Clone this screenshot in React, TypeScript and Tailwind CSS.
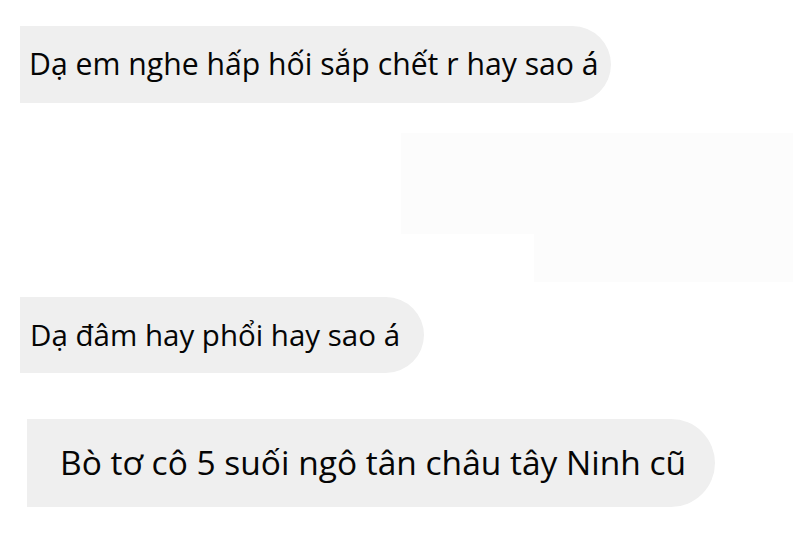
import React from 'react';

const font = { fontFamily: '"Open Sans", "Noto Sans", sans-serif' };

export default function App() {
  return (
    <div className="w-[793px] h-[554px] bg-white overflow-hidden text-[#050505]" style={font}>
      <div className="pt-[26px] flex flex-col">
        {/* Bubble 1 */}
        <div className="ml-[20px] w-[591px] h-[77px] bg-[#efefef] rounded-l-[8px] rounded-r-full flex items-center pl-[9px] text-[30.2px] leading-none">
          Dạ em nghe hấp hối sắp chết r hay sao á
        </div>

        {/* faint leftover blocks */}
        <div className="mt-[30px] ml-auto w-[392px] h-[101px] bg-[#fcfcfc]" />
        <div className="ml-auto w-[259px] h-[48px] bg-[#fcfcfc]" />

        {/* Bubble 2 */}
        <div className="mt-[15px] ml-[20px] w-[404px] h-[76px] bg-[#efefef] rounded-l-[8px] rounded-r-full flex items-center pl-[10px] text-[29.5px] leading-none">
          Dạ đâm hay phổi hay sao á
        </div>

        {/* Bubble 3 */}
        <div className="mt-[46px] ml-[27px] w-[688px] h-[88px] bg-[#efefef] rounded-l-[12px] rounded-r-full flex items-center pl-[33px] text-[33.5px] leading-none">
          Bò tơ cô 5 suối ngô tân châu tây Ninh cũ
        </div>
      </div>
    </div>
  );
}
